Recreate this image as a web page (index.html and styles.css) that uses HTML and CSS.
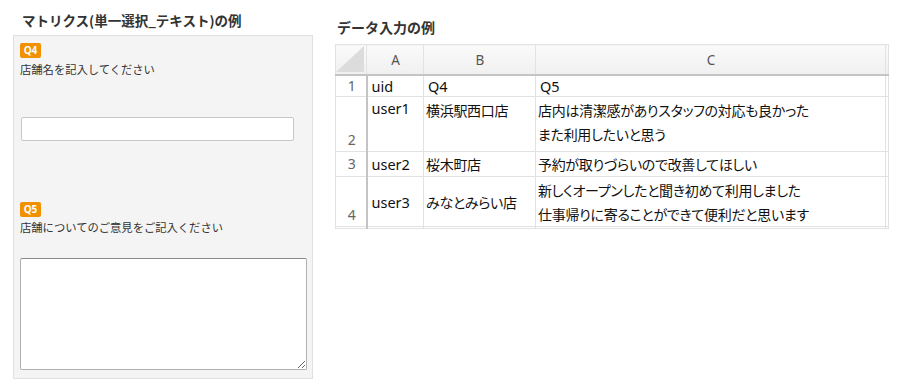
FILE: index.html
```html
<!DOCTYPE html>
<html lang="ja">
<head>
    <meta charset="UTF-8">
    <title>入力の例</title>
    <link rel="stylesheet" href="styles.css">
</head>
<body>
    <div class="page">
        <!-- 左: アンケート画面 -->
        <section class="survey">
            <h2 class="title">マトリクス(単一選択_テキスト)の例</h2>
            <div class="form-box">
                <div class="question">
                    <span class="badge">Q4</span>
                    <p class="label">店舗名を記入してください</p>
                    <input type="text" class="text-input">
                </div>
                <div class="question q5">
                    <span class="badge">Q5</span>
                    <p class="label">店舗についてのご意見をご記入ください</p>
                    <textarea class="text-area"></textarea>
                </div>
            </div>
        </section>

        <!-- 右: データの例 -->
        <section class="data">
            <h2 class="title">データ入力の例</h2>
            <table class="sheet">
                <colgroup>
                    <col class="c-num">
                    <col class="c-a">
                    <col class="c-b">
                    <col class="c-c">
                    <col class="c-x">
                </colgroup>
                <tr class="head">
                    <th class="corner"></th>
                    <th>A</th>
                    <th>B</th>
                    <th>C</th>
                    <th class="edge"></th>
                </tr>
                <tr class="r1">
                    <td class="num">1</td>
                    <td>uid</td>
                    <td>Q4</td>
                    <td>Q5</td>
                    <td class="edge"></td>
                </tr>
                <tr class="r2">
                    <td class="num bottom">2</td>
                    <td class="top">user1</td>
                    <td class="top jp">横浜駅西口店</td>
                    <td class="top jp">店内は清潔感がありスタッフの対応も良かった<br>また利用したいと思う</td>
                    <td class="edge"></td>
                </tr>
                <tr class="r3">
                    <td class="num">3</td>
                    <td>user2</td>
                    <td class="jp">桜木町店</td>
                    <td class="jp">予約が取りづらいので改善してほしい</td>
                    <td class="edge"></td>
                </tr>
                <tr class="r4">
                    <td class="num bottom">4</td>
                    <td>user3</td>
                    <td class="jp">みなとみらい店</td>
                    <td class="jp">新しくオープンしたと聞き初めて利用しました<br>仕事帰りに寄ることができて便利だと思います</td>
                    <td class="edge"></td>
                </tr>
                <tr class="r5">
                    <td class="num"></td>
                    <td></td>
                    <td></td>
                    <td></td>
                    <td class="edge"></td>
                </tr>
            </table>
        </section>
    </div>
</body>
</html>
```

FILE: styles.css
```css
/* General */
body {
    margin: 0;
    background: #fff;
    color: #333;
    font-family: "Noto Sans CJK JP", "Noto Sans", sans-serif;
}

.page {
    display: flex;
    align-items: flex-start;
}

.title {
    margin: 0;
    font-size: 14px;
    font-weight: bold;
    line-height: 20px;
    color: #333;
}

/* Left: survey form */
.survey {
    width: 300px;
    margin-left: 13px;
}

.survey .title {
    margin: 10px 0 5px 9px;
    font-size: 13.5px;
}

.form-box {
    background: #f4f4f4;
    border: 1px solid #e0e0e0;
    padding: 7px 6px 8px;
}

.badge {
    display: block;
    width: 21px;
    height: 15px;
    line-height: 15px;
    background: #f29100;
    border-radius: 2px;
    color: #fff;
    font-size: 10px;
    font-weight: bold;
    text-align: center;
    font-family: "Open Sans", sans-serif;
}

.label {
    margin: 3px 0 0;
    font-size: 11.3px;
    line-height: 16px;
    color: #333;
}

.text-input {
    display: block;
    box-sizing: border-box;
    width: 273px;
    height: 24px;
    margin: 40px 0 0 1px;
    border: 1px solid #c8c8c8;
    border-radius: 2px;
    background: #fff;
}

.q5 {
    margin-top: 61px;
}

.q5 .label {
    margin-top: 2px;
}

.text-area {
    display: block;
    box-sizing: border-box;
    width: 287px;
    height: 112px;
    margin-top: 23px;
    border: 1px solid #b0b0b0;
    border-top-color: #8a8a8a;
    border-radius: 2px;
    background: #fff;
    resize: both;
}

/* Right: spreadsheet */
.data {
    margin-left: 22px;
}

.data .title {
    margin: 17px 0 7px 2px;
}

.sheet {
    border-collapse: collapse;
    table-layout: fixed;
    width: 553px;
    border: 1px solid #e2e2e2;
    font-family: "Noto Sans", "Noto Sans CJK JP", sans-serif;
    font-size: 14.5px;
    color: #111;
}

.c-num { width: 31px; }
.c-a { width: 57px; }
.c-b { width: 112px; }
.c-c { width: 350px; }
.c-x { width: 3px; }

.sheet th,
.sheet td {
    padding: 0 3px 0 4px;
    border: 1px solid #e2e2e2;
    white-space: nowrap;
    overflow: hidden;
    vertical-align: middle;
}

.sheet th {
    height: 29px;
    background: linear-gradient(#fafafa, #f0f0f0);
    border-bottom: 2px solid #c4c4c4;
    font-weight: normal;
    color: #555;
    font-size: 13.5px;
}

.sheet .corner {
    position: relative;
    padding: 0;
}

.sheet .corner::after {
    content: "";
    position: absolute;
    right: 2px;
    bottom: 2px;
    border-style: solid;
    border-width: 0 0 26px 28px;
    border-color: transparent transparent #dcdcdc transparent;
}

.sheet .edge {
    padding: 0;
}

.sheet .num {
    border-right: 2px solid #c4c4c4;
    text-align: center;
    color: #666;
    font-size: 14px;
    padding: 0 0 0 2px;
}

.sheet .num.bottom {
    vertical-align: bottom;
    padding-bottom: 1px;
    line-height: 20px;
}

.sheet .top {
    vertical-align: top;
    padding-top: 1px;
}

.sheet .jp {
    padding-left: 2px;
    font-family: "Noto Sans CJK JP", sans-serif;
    font-feature-settings: "palt";
    font-size: 14px;
    letter-spacing: -0.3px;
    line-height: 24px;
}

.r1 td { height: 20px; line-height: 20px; }
.r2 td { height: 53px; }
.r3 td { height: 22px; line-height: 22px; }
.r4 td { height: 48px; }
.r5 td { height: 1px; padding-top: 0; padding-bottom: 0; line-height: 1px; }
```
